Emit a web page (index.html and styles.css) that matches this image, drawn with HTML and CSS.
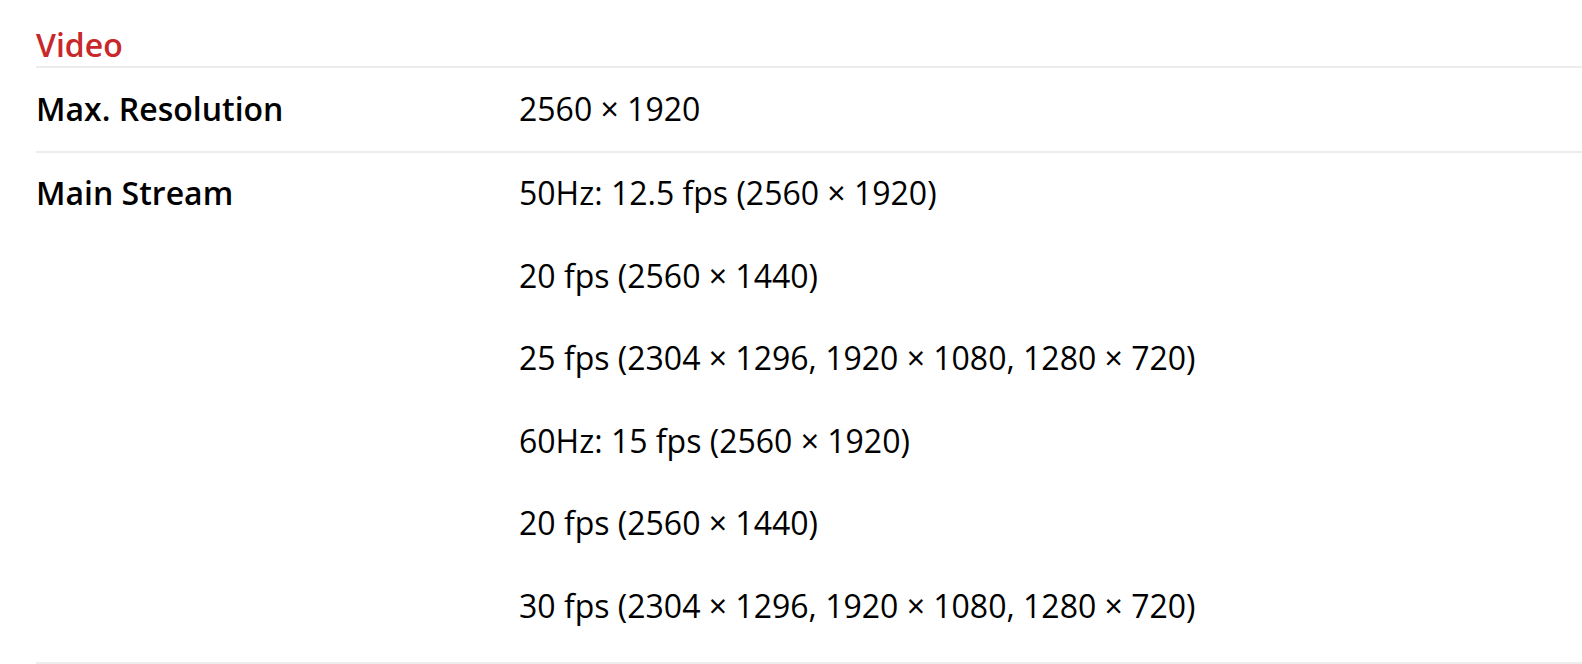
FILE: index.html
```html
<!DOCTYPE html>
<html lang="en">
<head>
<meta charset="utf-8">
<title>Video specs</title>
<link rel="stylesheet" href="styles.css">
</head>
<body>
<section class="spec">
  <h2 class="spec-title">Video</h2>
  <div class="spec-row">
    <div class="spec-label">Max. Resolution</div>
    <div class="spec-values">
      <p class="spec-line">2560 × 1920</p>
    </div>
  </div>
  <div class="spec-row spec-row-multi">
    <div class="spec-label">Main Stream</div>
    <div class="spec-values">
      <p class="spec-line">50Hz: 12.5 fps (2560 × 1920)</p>
      <p class="spec-line">20 fps (2560 × 1440)</p>
      <p class="spec-line">25 fps (2304 × 1296, 1920 × 1080, 1280 × 720)</p>
      <p class="spec-line">60Hz: 15 fps (2560 × 1920)</p>
      <p class="spec-line">20 fps (2560 × 1440)</p>
      <p class="spec-line">30 fps (2304 × 1296, 1920 × 1080, 1280 × 720)</p>
    </div>
  </div>
</section>
</body>
</html>
```

FILE: styles.css
```css
html, body {
  margin: 0;
  padding: 0;
  background: #ffffff;
}

body {
  font-family: "Open Sans", "Noto Sans", "Liberation Sans", sans-serif;
  color: #000000;
}

.spec {
  margin-left: 36px;
  padding-top: 26px;
}

.spec-title {
  margin: 0;
  font-size: 32px;
  font-weight: 600;
  line-height: 38px;
  color: #c8282a;
  border-bottom: 2px solid #ededed;
  padding-bottom: 2px;
}

.spec-row {
  display: grid;
  grid-template-columns: 483px 1fr;
  border-bottom: 2px solid #ededed;
  padding: 20px 0 22px;
}

.spec-row-multi {
  padding-top: 19px;
  padding-bottom: 36px;
}

.spec-label {
  font-size: 32px;
  font-weight: 600;
  line-height: 41px;
}

.spec-values {
  display: flex;
  flex-direction: column;
  gap: 41.6px;
}

.spec-line {
  margin: 0;
  font-size: 32px;
  line-height: 41px;
}
```
